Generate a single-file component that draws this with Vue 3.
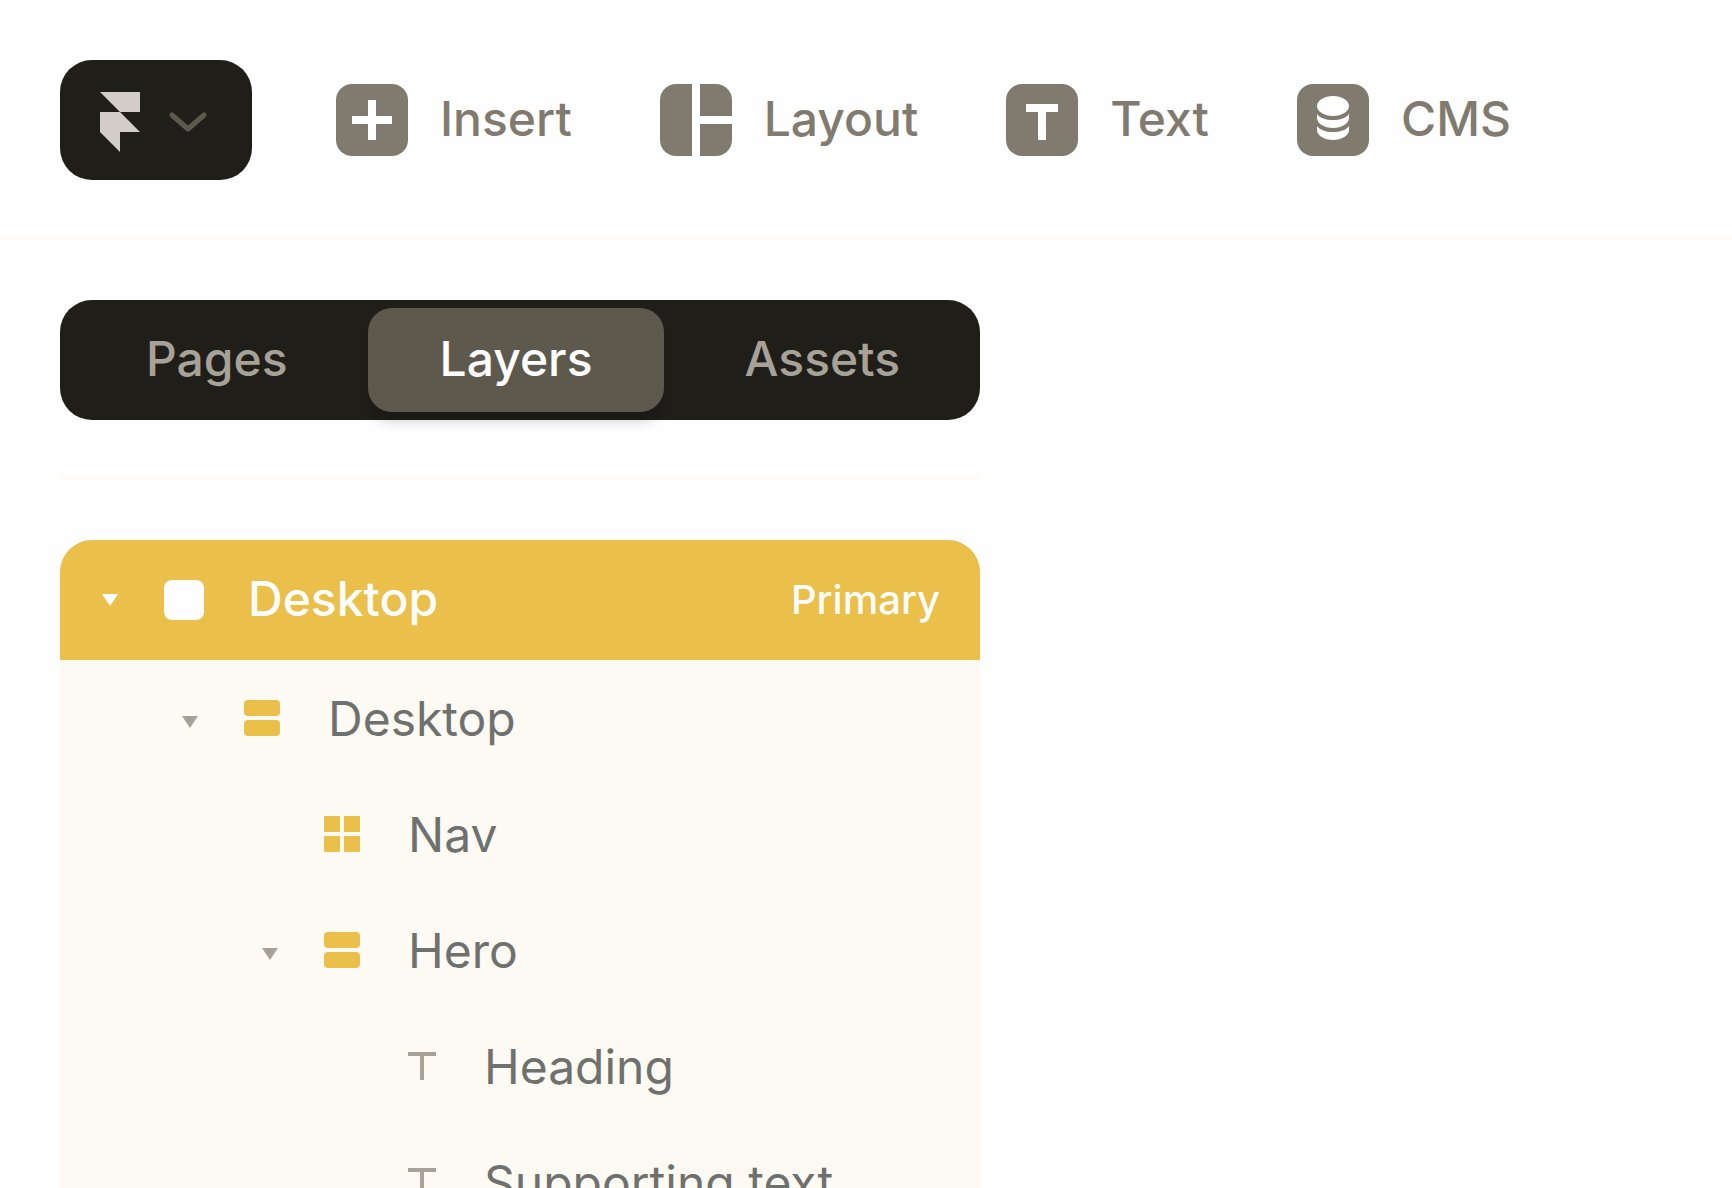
<template>
  <div class="editor">
    <header class="toolbar">
      <button class="menu-button" type="button" aria-label="Menu">
        <svg class="logo" viewBox="0 0 40 60" aria-hidden="true">
          <path d="M0 0H40V20H20Z" />
          <path d="M0 20H20L40 40H20V60L0 40Z" />
        </svg>
        <svg class="chevron" viewBox="0 0 40 24" aria-hidden="true">
          <path d="M4 5L20 19L36 5" />
        </svg>
      </button>

      <nav class="tools">
        <button v-for="tool in tools" :key="tool.id" class="tool" type="button">
          <svg class="tool-icon" viewBox="0 0 72 72" aria-hidden="true">
            <template v-if="tool.id === 'layout'">
              <path d="M16 0H32V72H16A16 16 0 0 1 0 56V16A16 16 0 0 1 16 0Z" />
              <path d="M40 0H56A16 16 0 0 1 72 16V32H40Z" />
              <path d="M40 40H72V56A16 16 0 0 1 56 72H40Z" />
            </template>
            <template v-else>
              <rect width="72" height="72" rx="16" />
              <path v-if="tool.id === 'insert'" class="cut" d="M32 16H40V32H56V40H40V56H32V40H16V32H32Z" />
              <path v-if="tool.id === 'text'" class="cut" d="M20 20H52V28H40V56H32V28H20Z" />
              <g v-if="tool.id === 'cms'" class="cut">
                <ellipse cx="36" cy="22" rx="16" ry="10" />
                <path d="M20 30C23 34 29 36 36 36S49 34 52 30V34A16 10 0 0 1 20 34Z" />
                <path d="M20 42C23 46 29 48 36 48S49 46 52 42V46A16 10 0 0 1 20 46Z" />
              </g>
            </template>
          </svg>
          <span class="tool-label">{{ tool.label }}</span>
        </button>
      </nav>
    </header>

    <aside class="panel">
      <div class="tabs" role="tablist">
        <button
          v-for="tab in tabs"
          :key="tab"
          class="tab"
          :class="{ active: tab === activeTab }"
          type="button"
          role="tab"
          :aria-selected="tab === activeTab"
          @click="activeTab = tab"
        >
          {{ tab }}
        </button>
      </div>

      <div class="divider"></div>

      <div class="tree">
        <button class="layer layer-root" type="button">
          <svg class="caret" viewBox="0 0 20 20" aria-hidden="true">
            <path d="M2 4H18L10 16Z" />
          </svg>
          <svg class="layer-icon" viewBox="0 0 40 40" aria-hidden="true">
            <rect width="40" height="40" rx="8" />
          </svg>
          <span class="layer-name">Desktop</span>
          <span class="badge">Primary</span>
        </button>

        <div class="children">
          <button
            v-for="layer in layers"
            :key="layer.name"
            class="layer"
            :class="'depth-' + layer.depth"
            type="button"
          >
            <svg class="caret" viewBox="0 0 20 20" aria-hidden="true">
              <path v-if="layer.open" d="M2 4H18L10 16Z" />
            </svg>
            <svg v-if="layer.type === 'stack'" class="layer-icon" viewBox="0 0 40 40" aria-hidden="true">
              <rect width="36" height="16" rx="4" />
              <rect y="20" width="36" height="16" rx="4" />
            </svg>
            <svg v-else-if="layer.type === 'grid'" class="layer-icon" viewBox="0 0 40 40" aria-hidden="true">
              <rect width="16" height="16" rx="1" />
              <rect x="20" width="16" height="16" rx="1" />
              <rect y="20" width="16" height="16" rx="1" />
              <rect x="20" y="20" width="16" height="16" rx="1" />
            </svg>
            <svg v-else class="layer-icon text-icon" viewBox="0 0 36 40" aria-hidden="true">
              <path d="M4 4H32V8H20V32H16V8H4Z" />
            </svg>
            <span class="layer-name">{{ layer.name }}</span>
          </button>
        </div>
      </div>
    </aside>
  </div>
</template>

<script setup>
import { ref } from 'vue'

const tools = [
  { id: 'insert', label: 'Insert' },
  { id: 'layout', label: 'Layout' },
  { id: 'text', label: 'Text' },
  { id: 'cms', label: 'CMS' }
]

const tabs = ['Pages', 'Layers', 'Assets']
const activeTab = ref('Layers')

const layers = ref([
  { name: 'Desktop', type: 'stack', depth: 1, open: true },
  { name: 'Nav', type: 'grid', depth: 2, open: false },
  { name: 'Hero', type: 'stack', depth: 2, open: true },
  { name: 'Heading', type: 'text', depth: 3, open: false },
  { name: 'Supporting text', type: 'text', depth: 3, open: false }
])
</script>

<style>
body {
  margin: 0;
  background-color: #fefefe;
}
</style>

<style scoped>
.editor {
  height: 100vh;
  overflow: hidden;
  background-color: #fefefe;
  font-family: Inter, "Liberation Sans", sans-serif;
  font-size: 48px;
  line-height: 60px;
}

button {
  margin: 0;
  padding: 0;
  border: none;
  background: none;
  font: inherit;
  color: inherit;
  cursor: pointer;
}

svg {
  display: block;
  flex-shrink: 0;
}

.toolbar {
  display: flex;
  align-items: center;
  gap: 84px;
  padding: 60px 60px 56px;
  border-bottom: 4px solid #fefbf5;
}

.menu-button {
  display: flex;
  flex-shrink: 0;
  align-items: center;
  gap: 28px;
  box-sizing: border-box;
  height: 120px;
  padding: 4px 44px 0 40px;
  border-radius: 32px;
  background-color: #201e19;
}

.logo {
  width: 40px;
  height: 60px;
  fill: #d2cec7;
}

.chevron {
  width: 40px;
  height: 24px;
  fill: none;
  stroke: #5e594d;
  stroke-width: 5;
  stroke-linecap: round;
  stroke-linejoin: round;
}

.tools {
  display: flex;
  gap: 88px;
}

.tool {
  display: flex;
  align-items: center;
  gap: 32px;
  color: #807b6e;
  font-weight: 500;
}

.tool-icon {
  width: 72px;
  height: 72px;
  fill: #807b6e;
}

.cut {
  fill: #fefefe;
}

.panel {
  width: 920px;
  max-width: 100%;
  padding: 60px;
}

.tabs {
  display: flex;
  justify-content: flex-end;
  gap: 8px;
  padding: 8px;
  border-radius: 32px;
  background-color: #201e19;
}

.tab {
  height: 104px;
  padding: 0 72px 2px;
  border-radius: 24px;
  color: #a6a297;
  font-weight: 500;
}

.tab.active {
  background-color: #5e594d;
  color: #fefefe;
  box-shadow: 0 12px 12px -2px rgba(0, 0, 0, 0.16);
}

.divider {
  height: 4px;
  margin: 56px 0 60px;
  background-color: #fefbf5;
}

.tree {
  overflow: hidden;
  border-radius: 32px;
  background-color: #fdfaf3;
}

.children {
  display: flex;
  flex-direction: column;
  gap: 4px;
  padding: 4px 0;
}

.layer {
  display: flex;
  align-items: center;
  gap: 44px;
  width: 100%;
  height: 112px;
  padding: 0 40px;
  color: #6f716f;
  text-align: left;
}

.layer-root {
  height: 120px;
  background-color: #eabf4a;
  color: #fefefe;
  font-weight: 500;
}

.depth-1 {
  padding-left: 120px;
}

.depth-2 {
  padding-left: 200px;
}

.depth-3 {
  padding-left: 280px;
}

.caret {
  width: 20px;
  height: 20px;
  fill: #a6a297;
}

.children .caret {
  padding-top: 4px;
}

.layer-icon {
  width: 40px;
  height: 40px;
  fill: #eabf4a;
}

.text-icon {
  width: 36px;
  fill: #a6a297;
}

.layer-root .caret,
.layer-root .layer-icon {
  fill: #fefefe;
}

.tool-label,
.layer-name {
  padding-bottom: 2px;
}

.layer-name {
  flex: 1;
}

.badge {
  font-size: 40px;
}
</style>
